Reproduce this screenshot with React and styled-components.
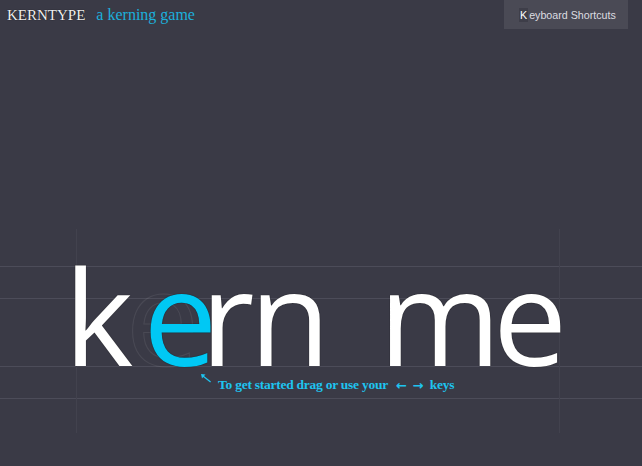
import React from 'react';
import styled, { createGlobalStyle } from 'styled-components';

const GlobalStyle = createGlobalStyle`
  html, body {
    margin: 0;
    padding: 0;
    background: #3a3a46;
  }
  body {
    font-family: 'Liberation Serif', serif;
  }
`;

// letters of the word, shift = how far each one is pushed from its natural spot
const letters = [
  { ch: 'k', shift: 0 },
  { ch: 'e', shift: 10, active: true },
  { ch: 'r', shift: -17 },
  { ch: 'n', shift: -5 },
  { ch: '\u00a0', shift: 0 },
  { ch: 'm', shift: 14 },
  { ch: 'e', shift: -8 }
];

const App = () => {
  return (
    <Page>
      <GlobalStyle />
      <Header>
        <Brand>
          <Logo>KERNTYPE</Logo>
          <Tagline>a kerning game</Tagline>
        </Brand>
        <ShortcutsButton>
          <KeyCap>K</KeyCap>eyboard Shortcuts
        </ShortcutsButton>
      </Header>

      <Stage>
        <HGuide top={37} />
        <HGuide top={69} />
        <HGuide top={137} />
        <HGuide top={169} />
        <VGuide left={76} />
        <VGuide left={559} />

        <Word>
          {letters.map((l, i) => (
            <Letter key={i} shift={l.shift} active={l.active}>
              {l.active && <Ghost>e</Ghost>}
              {l.ch}
            </Letter>
          ))}
        </Word>

        <Hint>
          <HintArrow viewBox="0 0 12 10">
            <path d="M1 1 L5.5 1.6 L4 3 L11 8.5 L10.2 9.4 L3.2 4 L2 5.6 Z" fill="#1ec4f0" />
          </HintArrow>
          <span>To get started drag or use your</span>
          <Arrows>&larr; &rarr;</Arrows>
          <span>keys</span>
        </Hint>
      </Stage>
    </Page>
  );
};

const Page = styled.div`
  width: 642px;
  height: 466px;
  overflow: hidden;
  background: #3a3a46;
`;

const Header = styled.header`
  display: flex;
  justify-content: space-between;
  align-items: flex-start;
  height: 29px;
`;

const Brand = styled.div`
  display: flex;
  align-items: baseline;
  gap: 11px;
  padding: 6px 0 0 7px;
`;

const Logo = styled.span`
  font-family: 'Liberation Serif', serif;
  font-size: 15px;
  color: #f0f0f0;
  text-shadow: 0 0 1px #000;
`;

const Tagline = styled.span`
  font-family: 'Liberation Serif', serif;
  font-size: 16px;
  color: #1cb0dc;
`;

const ShortcutsButton = styled.div`
  display: flex;
  align-items: center;
  width: 124px;
  height: 29px;
  margin-right: 14px;
  padding-left: 15px;
  box-sizing: border-box;
  background: #4a4a55;
  font-family: 'Liberation Sans', sans-serif;
  font-size: 10.7px;
  color: #dcdce0;
  white-space: nowrap;
`;

const KeyCap = styled.span`
  display: inline-block;
  background: #3e3e49;
  color: #ffffff;
  padding: 1px 1px;
  margin-right: 1px;
  line-height: 12px;
`;

const Stage = styled.section`
  position: relative;
  margin-top: 200px;
  height: 204px;
`;

const HGuide = styled.div`
  position: absolute;
  left: 0;
  right: 0;
  top: ${p => p.top}px;
  height: 1px;
  background: #4c4c59;
`;

const VGuide = styled.div`
  position: absolute;
  top: 0;
  bottom: 0;
  left: ${p => p.left}px;
  width: 1px;
  background: #42424e;
`;

const Word = styled.div`
  position: relative;
  display: flex;
  padding-left: 64px;
  padding-top: 20px;
  font-family: 'Open Sans', sans-serif;
  font-size: 132px;
  line-height: 132px;
  white-space: pre;
`;

const Letter = styled.span`
  position: relative;
  display: inline-block;
  margin-left: ${p => p.shift}px;
  color: ${p => (p.active ? '#00c8f4' : '#ffffff')};
  text-shadow: 0 0 1px rgba(0, 0, 0, 0.9);
  z-index: ${p => (p.active ? 2 : 1)};
`;

const Ghost = styled.span`
  position: absolute;
  left: -18px;
  top: 0;
  color: transparent;
  -webkit-text-stroke: 1px rgba(255, 255, 255, 0.08);
  text-shadow: none;
  z-index: -1;
`;

const Hint = styled.div`
  position: absolute;
  left: 200px;
  top: 148px;
  display: flex;
  align-items: center;
  gap: 6px;
  font-family: 'Liberation Serif', serif;
  font-weight: bold;
  font-size: 13.5px;
  color: #1ec4f0;
  letter-spacing: -0.25px;
`;

const HintArrow = styled.svg`
  width: 12px;
  height: 10px;
  margin-top: -14px;
`;

const Arrows = styled.span`
  margin: 0 0 0 2px;
  font-family: 'DejaVu Sans', sans-serif;
  font-weight: bold;
  font-size: 13px;
  letter-spacing: 0.5px;
`;

export default App;
